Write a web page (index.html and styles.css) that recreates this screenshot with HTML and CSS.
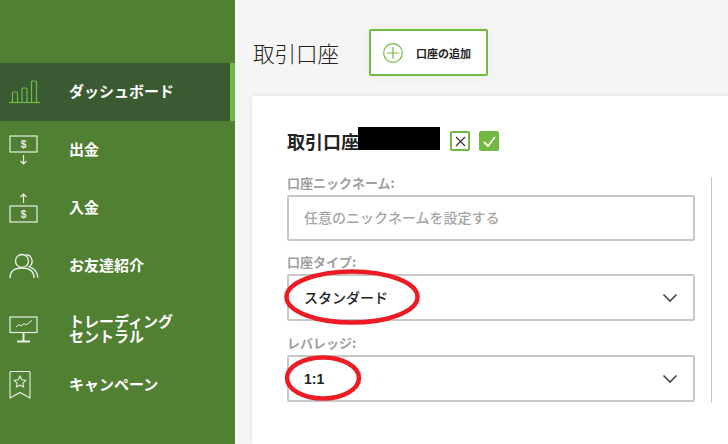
FILE: index.html
```html
<!DOCTYPE html>
<html lang="ja">
<head>
<meta charset="utf-8">
<title>取引口座</title>
<link rel="stylesheet" href="styles.css">
</head>
<body>
<div class="app">
  <nav class="sidebar">
    <a class="nav-item active">
      <span class="icon-slot"><svg width="32" height="24" viewBox="0 0 32 24" fill="none" stroke="#6fbb43" stroke-width="1.2"><path d="M0 22.5h31"/><path d="M3.500 22v-9q0-1 1-1h3q1 0 1 1v9M13 22V9q0-1 1-1h3q1 0 1 1v13M22.500 22V2q0-1 1-1h3q1 0 1 1v20"/></svg></span>
      <span class="nav-label">ダッシュボード</span>
    </a>
    <a class="nav-item">
      <span class="icon-slot"><svg width="30" height="30" viewBox="0 0 30 30" fill="none" stroke="#e8eee3" stroke-width="1.200"><rect x="1" y="1" width="27" height="16"/><path d="M14.500 20v9M11.500 26l3 3 3-3"/><text class="dollar" x="14.500" y="13">$</text></svg></span>
      <span class="nav-label">出金</span>
    </a>
    <a class="nav-item">
      <span class="icon-slot"><svg width="30" height="30" viewBox="0 0 30 30" fill="none" stroke="#e8eee3" stroke-width="1.200"><rect x="1" y="13" width="27" height="16"/><path d="M14.500 10V1M11.500 4l3-3 3 3"/><text class="dollar" x="14.500" y="25">$</text></svg></span>
      <span class="nav-label">入金</span>
    </a>
    <a class="nav-item">
      <span class="icon-slot"><svg width="30" height="26" viewBox="0 0 30 26" fill="none" stroke="#f0f3ec" stroke-width="1.300"><circle cx="13" cy="8" r="6.500"/><path d="M1 25q0-10 12-10t12 10"/><path d="M17 1.700a6.500 6.500 0 0 1 3 12q8 2.500 9 11"/></svg></span>
      <span class="nav-label">お友達紹介</span>
    </a>
    <a class="nav-item tall">
      <span class="icon-slot"><svg width="30" height="27" viewBox="0 0 30 27" fill="none" stroke="#e8eee3" stroke-width="1.200"><rect x="1" y="1" width="27" height="15.500"/><path d="M7 11l3-2.500 2 1.500 3-2.500 2 1.500 6-4.500" stroke-width="1"/><path d="M14.500 17v8M8 25.500h13" stroke-width="2"/></svg></span>
      <span class="nav-label two-line">トレーディング<br>セントラル</span>
    </a>
    <a class="nav-item last">
      <span class="icon-slot"><svg width="30" height="28" viewBox="0 0 30 28" fill="none" stroke="#e8eee3" stroke-width="1.100"><path d="M1 1.500q0-1 1-1h18q1 0 1 1V27l-10-5.500L1 27z"/><path d="M11 5l1.800 3.700 4 .6-2.900 2.800.7 4-3.600-1.900-3.600 1.900.7-4-2.900-2.800 4-.6z"/></svg></span>
      <span class="nav-label">キャンペーン</span>
    </a>
  </nav>
  <main class="main">
    <header class="page-head">
      <h1 class="page-title">取引口座</h1>
      <button class="add-btn" type="button">
        <svg width="20" height="20" viewBox="0 0 20 20" fill="none" stroke="#72b944" stroke-width="1.200"><circle cx="10" cy="10" r="9.300"/><path d="M10 4v12M4 10h12"/></svg>
        <span>口座の追加</span>
      </button>
    </header>
    <section class="card">
      <div class="form-col">
        <div class="card-head">
          <h2 class="card-title">取引口座</h2>
          <span class="redact"></span>
          <span class="icon-box cancel"><svg width="11" height="11" viewBox="0 0 11 11" fill="none" stroke="#333" stroke-width="1.200"><path d="M1 1l9 9M10 1l-9 9"/></svg></span>
          <span class="icon-box ok"><svg width="13" height="11" viewBox="0 0 13 11" fill="none" stroke="#fff" stroke-width="1.800"><path d="M1 6l4 4 7-9"/></svg></span>
        </div>
        <div class="field-wrap">
          <label class="field-label">口座ニックネーム:</label>
          <div class="field placeholder"><span class="nudge">任意のニックネームを設定する</span></div>
          <label class="field-label">口座タイプ:</label>
          <div class="field select spaced">
            <span class="nudge">スタンダード</span>
            <svg class="chev" width="16" height="10" viewBox="0 0 16 10" fill="none" stroke="#444" stroke-width="1.600"><path d="M1.500 1.500L8 8l6.500-6.500"/></svg>
            <svg class="mark mark-a" width="137" height="56" viewBox="0 0 137 56" fill="none" stroke="#ed1c24" stroke-width="4.500"><ellipse cx="68" cy="28" rx="65.500" ry="25.500"/></svg>
          </div>
          <label class="field-label">レバレッジ:</label>
          <div class="field select">
            <span class="value-num">1:1</span>
            <svg class="chev" width="16" height="10" viewBox="0 0 16 10" fill="none" stroke="#444" stroke-width="1.600"><path d="M1.500 1.500L8 8l6.500-6.500"/></svg>
            <svg class="mark mark-b" width="78" height="46" viewBox="0 0 78 46" fill="none" stroke="#ed1c24" stroke-width="4.500"><ellipse cx="39" cy="23" rx="36" ry="20.500"/></svg>
          </div>
        </div>
      </div>
      <div class="divider"></div>
    </section>
  </main>
</div>
</body>
</html>
```

FILE: styles.css
```css
* { box-sizing: border-box; }
html, body { margin: 0; height: 100%; overflow: hidden; }
body { font-family: "Noto Sans CJK JP", "Open Sans", sans-serif; color: #222; background: #f5f5f5; }
.app { display: flex; height: 444px; }

.sidebar { width: 235px; flex: none; background: #518033; padding-top: 63px; }
.nav-item { display: flex; align-items: center; height: 58px; padding-left: 9px; color: #fff; }
.nav-item.active { background: #3c5a32; border-right: 5px solid #6fbb43; }
.nav-item.tall { height: 68px; }
.nav-item.last { height: 44px; }
.icon-slot { display: flex; align-items: center; flex: none; width: 60px; }
.nav-label { font-size: 15px; font-weight: 700; line-height: 15px; margin-top: -4px; white-space: nowrap; }
.nav-label.two-line { margin-top: -2px; }
.dollar { font: 700 10px "Liberation Sans", sans-serif; fill: #e8eee3; stroke: none; text-anchor: middle; }

.main { flex: 1; min-width: 0; padding: 29px 0 0 18px; }
.page-head { display: flex; align-items: center; height: 47px; }
.page-title { margin: 0 30px 0 0; font-size: 21.500px; font-weight: 300; color: #222; white-space: nowrap; }
.add-btn { display: flex; align-items: center; gap: 13px; width: 119px; height: 47px; padding: 0 0 0 12px; background: #fff; border: 2px solid #72b944; border-radius: 2px; font: 700 11px "Noto Sans CJK JP", sans-serif; color: #222; box-shadow: 0 0 14px rgba(0,0,0,.05); }

.card { display: flex; height: 348px; margin: 20px 0 0 -1px; padding: 31px 0 0 35px; background: #fff; box-shadow: 0 0 4px rgba(0,0,0,.1); }
.form-col { width: 408px; flex: none; }
.card-head { display: flex; align-items: flex-start; height: 23px; }
.card-title { margin: 4px 0 0; font-size: 18px; line-height: 20px; font-weight: 700; color: #222; width: 71px; white-space: nowrap; }
.redact { width: 82px; height: 23px; background: #000; margin-right: 10px; }
.icon-box { display: flex; align-items: center; justify-content: center; width: 20px; height: 20px; margin: 4px 9px 0 0; border-radius: 2px; }
.icon-box.cancel { background: #fff; border: 2px solid #72b944; }
.icon-box.ok { background: #72b944; }

.field-wrap { margin-top: 26px; }
.field-label { display: block; height: 19px; font-size: 13px; line-height: 13px; font-weight: 700; color: #a0a0a0; }
.field { position: relative; display: flex; align-items: center; justify-content: space-between; height: 47px; margin-bottom: 14px; padding: 0 15px 0 15px; border: 2px solid #c8c8c8; border-radius: 2px; background: #fff; font-size: 14px; }
.field.placeholder { height: 46px; color: #a5a5a5; font-weight: 500; }
.field.spaced { margin-bottom: 15px; }
.nudge { margin-bottom: 2px; }
.select { color: #222; font-weight: 500; }
.value-num { font: 700 14px "Liberation Sans", sans-serif; }
.chev { margin-top: 1px; }
.mark { position: absolute; pointer-events: none; }
.mark-a { left: -5px; top: -7px; }
.mark-b { left: -5px; top: -2px; }

.divider { width: 1px; height: 226px; margin: 50px 0 0 16px; background: #c8c8c8; }
```
